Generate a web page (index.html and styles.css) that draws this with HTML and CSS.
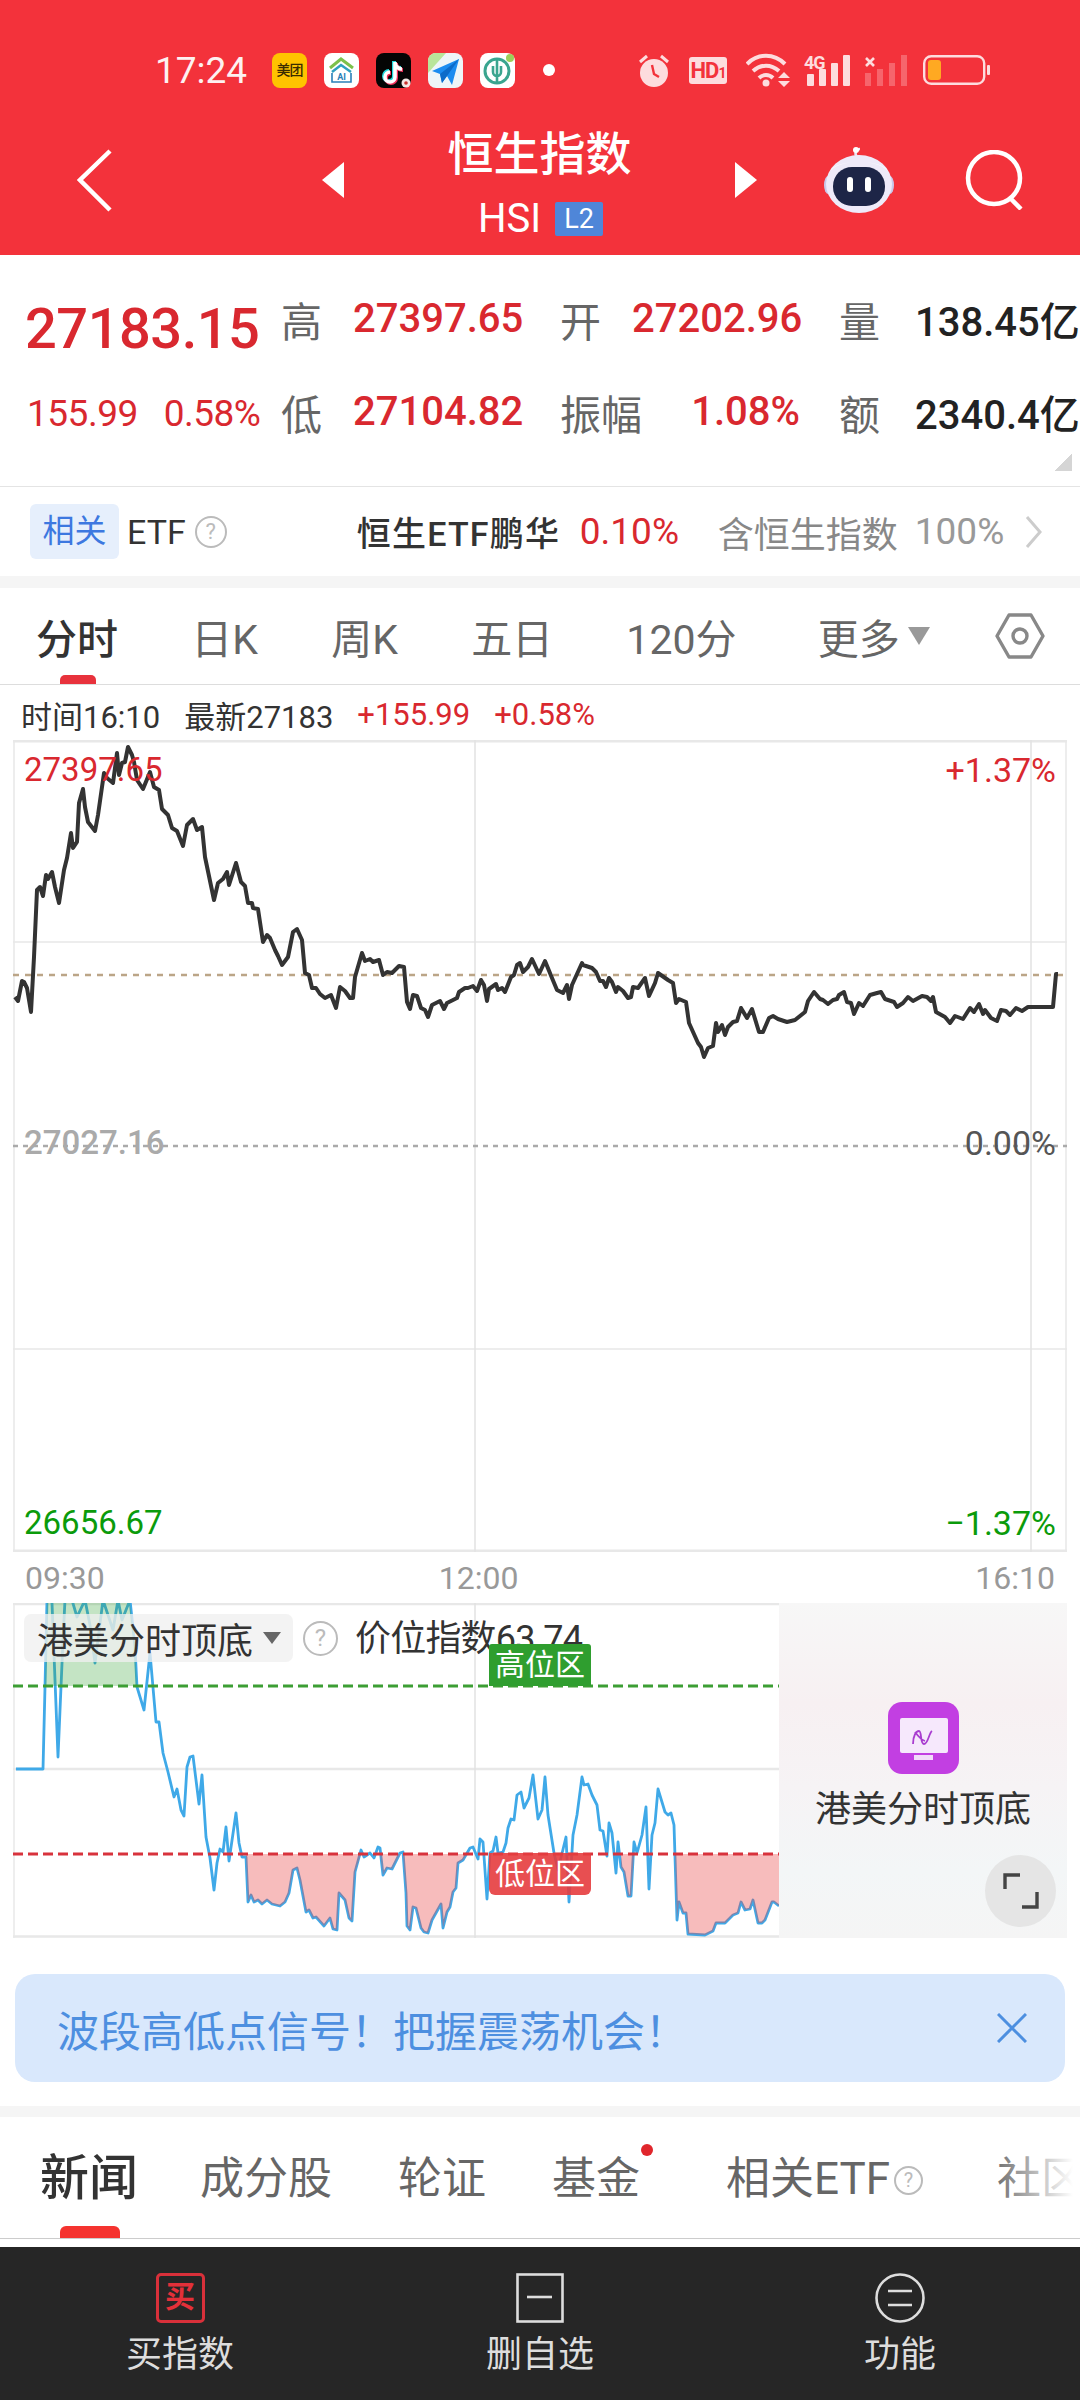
FILE: index.html
```html
<!DOCTYPE html>
<html lang="zh-CN">
<head>
    <meta charset="UTF-8">
    <meta name="viewport" content="width=device-width, initial-scale=1.0">
    <title>恒生指数</title>
    <link rel="stylesheet" href="styles.css">
</head>
<body>

<header class="top">
    <!-- status bar -->
    <div class="status">
        <span class="clock">17:24</span>
        <div class="apps">
            <span class="app app-mt">美团</span>
            <svg class="app" viewBox="0 0 35 35"><rect width="35" height="35" rx="8" fill="#fff"/><path d="M6 15 17 6l12 9" fill="none" stroke="#7cc04b" stroke-width="3"/><path d="M8 19l9-7 10 7" fill="none" stroke="#2f9fc0" stroke-width="2.5"/><path d="M8 20v9h19v-9" fill="none" stroke="#2a7fb8" stroke-width="1.6"/><text x="17.5" y="27" class="app-ai">AI</text></svg>
            <svg class="app" viewBox="0 0 35 35"><rect width="35" height="35" rx="8" fill="#050505"/><path d="M18 8v15a5 5 0 1 1-5-5M18 9c1 4 4 6 7 6" fill="none" stroke="#25dce0" stroke-width="4"/><path d="M20 10v15a5 5 0 1 1-5-5M20 11c1 4 4 6 7 6" fill="none" stroke="#f0305a" stroke-width="4"/><path d="M19 9v15a5 5 0 1 1-5-5M19 10c1 4 4 6 7 6" fill="none" stroke="#fff" stroke-width="3.6"/><circle cx="30" cy="30" r="4.5" fill="#f3e9e6"/><circle cx="30" cy="30" r="1.8" fill="#c8332e"/></svg>
            <svg class="app" viewBox="0 0 35 35"><rect width="35" height="35" rx="8" fill="#eef5f8"/><path d="M0 8a8 8 0 0 1 8-8h10L0 20z" fill="#b9e59a"/><path d="M4 18 31 6l-7 26-5-9-5 7-2-9z" fill="#1c8cf0"/><path d="M12 21 31 6 19 23l-5 7z" fill="#0d6bc9"/></svg>
            <svg class="app" viewBox="0 0 35 35"><rect width="35" height="35" rx="8" fill="#fff"/><circle cx="17" cy="18" r="12" fill="none" stroke="#3aa58f" stroke-width="3"/><path d="M17 7v22M13 13v6a4 4 0 0 0 8 0v-6" fill="none" stroke="#3aa58f" stroke-width="2.6"/><circle cx="30" cy="5" r="4" fill="#9ccf5a"/></svg>
            <span class="dot"></span>
        </div>
        <div class="sys">
            <svg class="sys-alarm" viewBox="0 0 32 34"><path d="M2 9l7-6M30 9l-7-6" stroke="#fddcde" stroke-width="3"/><circle cx="16" cy="20" r="14" fill="#fddcde"/><path d="M14 12l2 9 5 3" fill="none" stroke="#f3323b" stroke-width="2.4"/></svg>
            <span class="sys-hd">HD<small>1</small></span>
            <svg class="sys-wifi" viewBox="0 0 44 34"><g fill="none" stroke="#fddcde" stroke-width="4"><path d="M1 11c11-11 27-11 38 0"/><path d="M7 18c8-7 18-7 26 0"/><path d="M13 25c4-4 10-4 14 0"/></g><circle cx="20" cy="30" r="3.5" fill="#fddcde"/><path d="M32 25h12l-6-6zM32 28h12l-6 6z" fill="#fddcde"/></svg>
            <svg class="sys-sig" viewBox="0 0 46 31"><text x="0" y="14" class="sig-4g">4G</text><g fill="#fddcde"><rect x="3" y="19" width="7" height="12" rx="1"/><rect x="15" y="14" width="7" height="17" rx="1" /><rect x="27" y="8" width="7" height="23" rx="1"/><rect x="39" y="0" width="7" height="31" rx="1"/></g></svg>
            <svg class="sys-sig2" viewBox="0 0 43 31"><path d="M1 3l8 8M9 3l-8 8" stroke="#fddcde" stroke-width="2.6"/><g fill="#fddcde" opacity=".3"><rect x="0" y="18" width="6" height="13"/><rect x="12" y="14" width="6" height="17"/><rect x="24" y="8" width="6" height="23"/><rect x="36" y="0" width="6" height="31"/></g></svg>
            <svg class="sys-bat" viewBox="0 0 67 30"><rect x="1.2" y="1.2" width="60" height="27.6" rx="7" fill="none" stroke="#fddcde" stroke-width="2.4"/><rect x="5" y="5" width="13" height="20" rx="3" fill="#ffa922"/><rect x="64" y="10" width="3" height="10" rx="1" fill="#fddcde"/></svg>
        </div>
    </div>

    <!-- nav -->
    <nav class="nav">
        <svg class="back" viewBox="0 0 35 63"><path d="M33 2 3 31l30 30" fill="none" stroke="#fff" stroke-width="4.5"/></svg>
        <svg class="tri tri-l" viewBox="0 0 22 36"><path d="M22 0v36L0 18z" fill="#fff"/></svg>
        <div class="title">
            <div class="title-name">恒生指数</div>
            <div class="title-code">HSI <span class="l2">L2</span></div>
        </div>
        <svg class="tri" viewBox="0 0 22 36"><path d="M0 0v36l22-18z" fill="#fff"/></svg>
        <svg class="robot" viewBox="0 0 70 66"><path d="M33 10c-3-3-1-8 3-8" fill="none" stroke="#e9e6f5" stroke-width="2.5"/><circle cx="32" cy="3" r="3" fill="#fff"/><ellipse cx="4" cy="38" rx="4" ry="9" fill="#c9c8ea"/><ellipse cx="66" cy="38" rx="4" ry="9" fill="#c9c8ea"/><ellipse cx="35" cy="37" rx="33" ry="29" fill="#eeeaf9"/><path d="M6 24C12 12 58 12 64 24 54 12 16 12 6 24z" fill="#fff"/><rect x="9" y="20" width="52" height="39" rx="19" fill="#1d2547"/><rect x="23" y="30" width="6" height="15" rx="3" fill="#fff"/><rect x="41" y="30" width="6" height="15" rx="3" fill="#fff"/></svg>
        <svg class="search" viewBox="0 0 60 60"><circle cx="29" cy="28" r="26" fill="none" stroke="#fff" stroke-width="4.5"/><path d="M45 48l11 11" stroke="#fff" stroke-width="4.5"/></svg>
    </nav>
</header>

<!-- quote numbers -->
<section class="stats">
    <div class="price">27183.15</div>
    <div class="lbl">高</div><div class="val up">27397.65</div>
    <div class="lbl">开</div><div class="val up right">27202.96</div>
    <div class="lbl">量</div><div class="val dark">138.45亿</div>

    <div class="change"><span>155.99</span><span>0.58%</span></div>
    <div class="lbl">低</div><div class="val up">27104.82</div>
    <div class="lbl">振幅</div><div class="val up right">1.08%</div>
    <div class="lbl">额</div><div class="val dark">2340.4亿</div>
    <i class="corner"></i>
</section>

<section class="etf">
    <span class="etf-tag">相关</span>
    <span class="etf-word">ETF</span>
    <span class="help etf-help">?</span>
    <span class="etf-name">恒生ETF鹏华</span>
    <span class="etf-pct">0.10%</span>
    <span class="etf-inc">含恒生指数</span>
    <span class="etf-full">100%</span>
    <svg class="etf-more" viewBox="0 0 17 32"><path d="M2 1l13 15L2 31" fill="none" stroke="#ccc" stroke-width="3"/></svg>
</section>

<div class="sep"></div>

<div class="tabs">
    <span class="tab tab-on">分时</span>
    <span class="tab">日K</span>
    <span class="tab">周K</span>
    <span class="tab">五日</span>
    <span class="tab">120分</span>
    <span class="tab tab-more">更多<i class="caret"></i></span>
    <svg class="hex" viewBox="0 0 50 46"><path d="M14 2h22l12 21-12 21H14L2 23z" fill="none" stroke="#888" stroke-width="3.4" stroke-linejoin="round"/><circle cx="25" cy="23" r="7" fill="none" stroke="#888" stroke-width="3.4"/></svg>
</div>

<div class="tick">
    <span>时间16:10</span>
    <span>最新27183</span>
    <span class="up">+155.99</span>
    <span class="up">+0.58%</span>
</div>

<!-- intraday chart -->
<div class="chart">
    <svg viewBox="13 740 1054 812" class="chart-svg">
        <g stroke="#e8e8e8" stroke-width="1.5" fill="none">
            <path d="M13 741H1067M13 1551H1067" stroke-width="3"/>
            <path d="M13 942H1067M13 1349H1067M14 740V1552M1066 740V1552"/>
            <path d="M475 740V1552M1031 740V1552" stroke="#e2e2e2"/>
        </g>
        <path d="M13 975H1067" stroke="#bba587" stroke-width="2.5" stroke-dasharray="6 6"/>
        <path d="M13 1146H1067" stroke="#aaa" stroke-width="2.5" stroke-dasharray="5 5"/>
        <polyline fill="none" stroke="#333" stroke-width="4" stroke-linejoin="round" points="15,997 18,1001 22,981 24,982 27,988 31,1012 34,957 37,890 40,887 43,896 46,875 48,879 52,872 55,887 59,903 64,870 67,858 71,833 73,848 77,842 79,803 83,789 85,807 88,822 95,831 98,815 104,773 107,778 113,783 117,753 119,775 122,763 125,762 128,747 132,755 134,762 137,780 143,789 150,772 154,787 159,790 162,809 168,815 172,828 177,831 183,846 187,825 193,819 197,830 202,827 205,857 214,900 218,883 223,879 227,872 229,885 236,863 241,882 245,886 248,903 252,903 253,908 258,909 263,942 267,935 270,938 275,950 278,956 282,965 288,957 293,932 297,929 302,940 305,973 309,975 312,988 316,988 320,994 325,998 331,995 336,1008 340,987 345,991 350,998 353,998 355,977 362,953 365,961 370,959 373,962 379,960 383,975 387,972 392,973 399,966 404,967 407,1002 410,1009 413,995 417,996 421,1008 425,1010 428,1017 432,1005 440,1001 444,1009 447,1003 457,998 459,992 465,988 468,988 473,986 477,991 481,980 484,985 487,1001 489,989 496,984 498,990 502,988 505,992 511,977 514,975 517,965 520,963 523,972 528,967 532,959 539,974 545,961 552,978 557,990 563,993 567,985 569,999 572,985 582,963 583,965 592,968 596,972 600,981 603,981 606,987 609,978 612,982 616,992 618,987 623,991 628,998 631,997 633,987 638,988 645,978 649,996 655,983 658,973 668,980 673,983 676,1003 679,999 686,1002 689,1023 698,1043 701,1047 704,1057 708,1048 713,1046 716,1023 718,1032 722,1025 725,1035 728,1027 733,1022 737,1021 741,1008 747,1018 752,1009 759,1032 763,1032 769,1018 773,1016 778,1019 787,1022 795,1020 805,1012 808,1001 814,992 820,999 823,1000 828,1004 833,1000 837,999 839,995 844,992 847,1002 851,1003 854,1014 859,1003 863,1006 870,995 877,993 881,992 885,999 894,1002 897,1007 903,1003 908,997 913,1001 922,996 927,997 931,1001 933,997 936,1012 945,1017 950,1023 955,1016 963,1019 970,1008 974,1012 979,1004 983,1014 985,1010 991,1018 997,1021 1001,1010 1006,1011 1010,1015 1016,1008 1022,1011 1028,1007 1053,1007 1056,974 1058,974"/>
    </svg>
    <span class="pl pl-l pl-top up">27397.65</span>
    <span class="pl pl-r pl-top up">+1.37%</span>
    <span class="pl pl-l pl-mid pl-gray">27027.16</span>
    <span class="pl pl-r pl-mid pl-dark">0.00%</span>
    <span class="pl pl-l pl-bot down">26656.67</span>
    <span class="pl pl-r pl-bot down">−1.37%</span>
</div>

<div class="axis">
    <span>09:30</span>
    <span class="axis-mid">12:00</span>
    <span class="axis-end">16:10</span>
</div>

<!-- sub chart -->
<div class="sub">
    <div class="sub-plot">
        <svg viewBox="13 1603 766 335" class="sub-svg">
            <defs>
                <clipPath id="lowClip"><rect x="13" y="1854" width="766" height="84"/></clipPath>
                <clipPath id="highClip"><rect x="13" y="1603" width="766" height="83"/></clipPath>
            </defs>
            <g stroke="#e8e8e8" fill="none">
                <path d="M13 1604H779M13 1769H779M13 1936.5H779" stroke-width="2.5"/>
                <path d="M14 1603V1938" stroke-width="1.5"/>
                <path d="M475 1603V1938" stroke="#e2e2e2" stroke-width="1.5"/>
            </g>
            <polyline fill="none" stroke="#3fa9e8" stroke-width="2.8" stroke-linejoin="round" points="16,1769 43,1769 45,1687 47,1600 50,1600 52,1603 58,1757 63,1640 65,1600 72,1600 77,1617 85,1600 90,1625 95,1663 103,1600 113,1630 118,1600 122,1620 130,1600 135,1647 137,1687 144,1710 150,1653 156,1722 159,1722 163,1753 168,1772 174,1797 177,1789 181,1810 184,1816 187,1767 190,1757 193,1756 199,1804 202,1775 206,1837 210,1858 214,1890 217,1863 220,1849 223,1852 226,1827 229,1861 236,1813 239,1843 242,1857 246,1857 248,1902 251,1895 254,1902 258,1900 262,1904 267,1900 272,1904 280,1906 285,1902 289,1893 293,1870 297,1868 300,1880 306,1912 309,1910 313,1918 316,1917 324,1926 330,1918 333,1929 337,1930 339,1893 345,1900 349,1918 352,1921 355,1872 361,1850 364,1857 370,1853 374,1858 378,1847 380,1848 383,1875 387,1868 392,1869 400,1853 403,1852 406,1893 407,1926 410,1930 413,1907 416,1908 421,1928 424,1932 428,1933 432,1920 441,1904 443,1928 447,1912 450,1907 453,1892 456,1888 458,1863 463,1860 470,1848 473,1847 478,1859 480,1839 483,1842 487,1899 490,1853 493,1851 496,1837 498,1853 503,1852 506,1843 508,1828 511,1819 514,1820 517,1795 521,1792 524,1808 529,1798 533,1775 538,1819 542,1810 545,1777 548,1815 554,1853 558,1870 566,1837 569,1902 573,1835 577,1815 582,1777 584,1785 588,1784 592,1795 597,1805 600,1830 603,1831 607,1856 609,1823 612,1833 616,1873 618,1842 621,1867 624,1872 628,1896 631,1896 634,1842 637,1853 642,1835 646,1807 649,1889 652,1835 655,1823 658,1789 665,1812 668,1815 671,1813 674,1825 677,1920 679,1902 683,1913 686,1913 688,1934 705,1935 713,1931 716,1923 725,1923 733,1915 738,1913 741,1902 745,1910 750,1909 753,1900 758,1923 762,1923 765,1920 772,1902 774,1902 779,1906"/>
            <polygon clip-path="url(#lowClip)" fill="rgba(232,70,70,.36)" points="246,1854 246,1857 248,1902 251,1895 254,1902 258,1900 262,1904 267,1900 272,1904 280,1906 285,1902 289,1893 293,1870 297,1868 300,1880 306,1912 309,1910 313,1918 316,1917 324,1926 330,1918 333,1929 337,1930 339,1893 345,1900 349,1918 352,1921 355,1872 361,1854"/>
            <polygon clip-path="url(#lowClip)" fill="rgba(232,70,70,.36)" points="403,1854 406,1893 407,1926 410,1930 413,1907 416,1908 421,1928 424,1932 428,1933 432,1920 441,1904 443,1928 447,1912 450,1907 453,1892 456,1888 458,1863 463,1860 467,1854"/>
            <polygon clip-path="url(#lowClip)" fill="rgba(232,70,70,.36)" points="621,1854 621,1867 624,1872 628,1896 631,1896 634,1854"/>
            <polygon clip-path="url(#lowClip)" fill="rgba(232,70,70,.36)" points="675,1854 677,1920 679,1902 683,1913 686,1913 688,1934 705,1935 713,1931 716,1923 725,1923 733,1915 738,1913 741,1902 745,1910 750,1909 753,1900 758,1923 762,1923 765,1920 772,1902 774,1902 779,1906 779,1854"/>
            <polygon clip-path="url(#lowClip)" fill="rgba(232,70,70,.3)" points="380,1854 383,1875 387,1868 392,1869 400,1854"/>
            <polygon clip-path="url(#highClip)" fill="rgba(60,165,60,.3)" points="45,1686 47,1603 130,1603 135,1647 137,1686"/>
            <path d="M13 1686H779" stroke="#3c9e34" stroke-width="3" stroke-dasharray="10 5"/>
            <path d="M13 1854H779" stroke="#d8323c" stroke-width="3" stroke-dasharray="10 5"/>
        </svg>
        <div class="pick">港美分时顶底<i class="caret caret-dark"></i></div>
        <span class="help sub-help">?</span>
        <span class="sub-val">价位指数63.74</span>
        <span class="zone zone-high">高位区</span>
        <span class="zone zone-low">低位区</span>
    </div>
    <div class="sub-side">
        <svg class="side-icon" viewBox="0 0 71 72"><rect width="71" height="72" rx="14" fill="#c23fe2"/><rect x="12" y="16" width="48" height="35" rx="2" fill="#f6e8fc"/><rect x="26" y="53" width="19" height="5" fill="#f2dcf9"/><path d="M25 42c0-8 3-13 6-13 3 0 1 13 5 13 4 0 5-11 8-13M27 30c3 4 6 8 10 9" fill="none" stroke="#a93dd0" stroke-width="1.8"/></svg>
        <div class="side-name">港美分时顶底</div>
        <div class="expand">
            <svg viewBox="0 0 36 36"><path d="M2 16V2h15M34 19v15H19" fill="none" stroke="#444" stroke-width="3.4"/></svg>
        </div>
    </div>
</div>

<div class="banner">
    <span>波段高低点信号！把握震荡机会！</span>
    <svg viewBox="0 0 30 30"><path d="M1 1l28 28M29 1 1 29" stroke="#4d8fe0" stroke-width="3" fill="none"/></svg>
</div>

<div class="sep sep-news"></div>

<div class="news">
    <span class="news-tab news-on">新闻</span>
    <span class="news-tab">成分股</span>
    <span class="news-tab">轮证</span>
    <span class="news-tab news-dot">基金</span>
    <span class="news-tab news-etf">相关ETF<span class="help news-help">?</span></span>
    <span class="news-tab">社区</span>
</div>

<footer class="foot">
    <div class="foot-item">
        <span class="foot-buy">买</span>
        <span>买指数</span>
    </div>
    <div class="foot-item">
        <svg class="foot-ico" viewBox="0 0 48 50"><rect x="1.5" y="1.5" width="45" height="47" fill="none" stroke="#ddd" stroke-width="2.6"/><path d="M11 24h25" stroke="#ddd" stroke-width="2.6"/></svg>
        <span>删自选</span>
    </div>
    <div class="foot-item">
        <svg class="foot-ico" viewBox="0 0 50 50"><circle cx="25" cy="25" r="23.5" fill="none" stroke="#ddd" stroke-width="2.6"/><path d="M13 18h24M13 32h24" stroke="#ddd" stroke-width="2.6"/></svg>
        <span>功能</span>
    </div>
</footer>

</body>
</html>
```

FILE: styles.css
```css
* { box-sizing: border-box; }
html, body { margin: 0; padding: 0; }
body {
    width: 1080px;
    height: 2400px;
    overflow: hidden;
    background: #fff;
    color: #333;
    font-family: Roboto, "Noto Sans CJK SC", sans-serif;
}
svg { display: block; flex: none; }
.up { color: #d9282f; }
.down { color: #0b9b0b; }

/* header */
.top { height: 255px; background: #f3323b; color: #fff; padding-top: 50px; }
.status { display: flex; align-items: center; height: 40px; padding-left: 155px; }
.clock { font-size: 37px; width: 117px; color: #fdf1f1; }
.apps { display: flex; align-items: center; gap: 17px; }
.app { width: 35px; height: 35px; display: block; }
.app-mt {
    background: #ffc300;
    border-radius: 8px;
    color: #3a2c00;
    font-size: 14px;
    font-weight: 500;
    line-height: 35px;
    text-align: center;
    white-space: nowrap;
    letter-spacing: -1px;
}
.app-ai { font: 700 9px Roboto, sans-serif; fill: #2a7fb8; text-anchor: middle; }
.dot { width: 12px; height: 12px; background: #fff; border-radius: 50%; margin-left: 11px; }
.sys { display: flex; align-items: center; margin-left: 83px; }
.sys-alarm { width: 32px; height: 34px; }
.sys-hd {
    width: 38px;
    height: 27px;
    margin-left: 19px;
    background: #fddcde;
    border-radius: 3px;
    color: #f3323b;
    font: 700 22px/27px "Liberation Sans Narrow", Roboto, sans-serif;
    text-align: center;
    letter-spacing: -1px;
}
.sys-hd small { font-size: 14px; }
.sys-wifi { width: 44px; height: 34px; margin-left: 19px; }
.sys-sig { width: 46px; height: 31px; margin-left: 14px; overflow: visible; }
.sig-4g { font: 700 18px Roboto, sans-serif; fill: #fddcde; letter-spacing: -1px; }
.sys-sig2 { width: 43px; height: 31px; margin-left: 15px; }
.sys-bat { width: 67px; height: 30px; margin-left: 15px; }

.nav { display: flex; align-items: center; height: 120px; margin-top: 30px; padding-left: 77px; }
.back { width: 35px; height: 63px; }
.tri { width: 22px; height: 36px; }
.tri-l { margin-left: 210px; }
.title { width: 391px; text-align: center; padding-top: 2px; }
.title-name { font-size: 46px; font-weight: 500; line-height: 62px; }
.title-code { display: flex; justify-content: center; align-items: center; gap: 14px; font-size: 40px; line-height: 40px; margin-top: 14px; padding-left: 2px; }
.l2 { width: 48px; height: 34px; background: #4f86d8; font-size: 27px; line-height: 34px; color: #fff; border-radius: 2px; }
.robot { width: 70px; height: 66px; margin-left: 67px; }
.search { width: 60px; height: 60px; margin-left: 71px; }

/* numbers */
.stats {
    position: relative;
    display: grid;
    grid-template-columns: 281px 72px 207px 72px 207px 76px 163px;
    grid-auto-rows: 93px;
    align-items: center;
    height: 232px;
    padding-top: 17px;
    border-bottom: 1.5px solid #e4e4e4;
}
.price { font-size: 56px; font-weight: 500; color: #d9282f; padding: 20px 0 0 25px; letter-spacing: -.5px; }
.change { display: flex; font-size: 37px; color: #d9282f; padding: 4px 0 0 27px; gap: 26px; white-space: nowrap; letter-spacing: -.5px; }
.lbl { font-size: 41px; color: #666; white-space: nowrap; }
.val { font-size: 40px; font-weight: 500; white-space: nowrap; }
.val.right { text-align: right; padding-right: 39px; }
.val.dark { color: #222; }
.corner {
    position: absolute;
    right: 8px;
    bottom: 15px;
    width: 18px;
    height: 18px;
    background: linear-gradient(135deg, transparent 50%, #d5d5d5 50%);
}

.etf { display: flex; align-items: center; height: 89px; padding-left: 30px; }
.etf-tag { width: 89px; height: 55px; background: #e6effc; border-radius: 6px; color: #3d78e0; font-size: 32px; line-height: 55px; text-align: center; }
.etf-word { font-size: 34px; color: #333; margin-left: 8px; }
.help {
    display: inline-block;
    width: 32px;
    height: 32px;
    border: 2px solid #bbb;
    border-radius: 50%;
    color: #bbb;
    font-size: 22px;
    line-height: 28px;
    text-align: center;
    font-weight: 400;
}
.etf-help { margin-left: 9px; }
.etf-name { font-size: 34px; font-weight: 500; color: #333; margin-left: 130px; white-space: nowrap; width: 223px; letter-spacing: 1.2px; }
.etf-pct { font-size: 37px; color: #d9282f; width: 138px; }
.etf-inc { font-size: 36px; color: #888; width: 197px; white-space: nowrap; }
.etf-full { font-size: 37px; color: #999; width: 110px; }
.etf-more { width: 17px; height: 32px; }

.sep { height: 12px; background: #f5f5f5; }

.tabs {
    position: relative;
    display: flex;
    align-items: center;
    justify-content: space-between;
    height: 97px;
    padding: 0 35px 0 36px;
    border-bottom: 1px solid #ddd;
    font-size: 41px;
    color: #666;
}
.tab-on { color: #333; font-weight: 500; }
.tab-on::after {
    content: "";
    position: absolute;
    left: 60px;
    bottom: 0;
    width: 36px;
    height: 9px;
    background: #e8323c;
    border-radius: 5px 5px 0 0;
}
.tab-more { display: flex; align-items: center; gap: 8px; margin-left: 8px; margin-right: -8px; }
.caret {
    display: inline-block;
    width: 0;
    height: 0;
    border-left: 11px solid transparent;
    border-right: 11px solid transparent;
    border-top: 18px solid #999;
}
.hex { width: 50px; height: 46px; }

.tick { display: flex; height: 55px; align-items: center; padding: 3px 0 0 21px; font-size: 31px; color: #333; gap: 24px; white-space: nowrap; }

/* charts */
.chart { position: relative; height: 812px; margin: 0 13px; }
.chart-svg { width: 1054px; height: 812px; }
.pl { position: absolute; font-size: 33px; line-height: 40px; white-space: nowrap; }
.pl-l { left: 11px; }
.pl-r { right: 11px; font-size: 34px; }
.pl-top { top: 10px; }
.pl-mid { top: 383px; }
.pl-bot { top: 763px; }
.pl-gray { color: #aaa; font-weight: 500; }
.pl-dark { color: #555; }

.axis { display: flex; align-items: center; height: 51px; padding: 0 25px; color: #999; font-size: 32px; }
.axis-mid { margin-left: 334px; }
.axis-end { margin-left: auto; }

.sub { display: flex; height: 335px; margin: 0 13px; }
.sub-plot { position: relative; width: 766px; overflow: hidden; }
.sub-svg { width: 766px; height: 335px; }
.pick {
    position: absolute;
    left: 11px;
    top: 11px;
    display: flex;
    align-items: center;
    width: 269px;
    height: 48px;
    padding-left: 13px;
    background: rgba(240, 240, 240, .78);
    border-radius: 7px;
    font-size: 36px;
    color: #333;
    white-space: nowrap;
}
.caret-dark { margin-left: 10px; border-left-width: 9px; border-right-width: 9px; border-top: 12px solid #666; }
.sub-help { position: absolute; left: 290px; top: 18px; width: 35px; height: 35px; font-size: 24px; line-height: 30px; }
.sub-val { position: absolute; left: 342px; top: 14px; font-size: 36px; line-height: 44px; color: #333; white-space: nowrap; letter-spacing: -.8px; }
.zone {
    position: absolute;
    left: 476px;
    width: 102px;
    height: 42px;
    color: #fff;
    font-size: 30px;
    line-height: 42px;
    text-align: center;
    white-space: nowrap;
}
.zone-high { top: 41px; background: #2f9e2f; border-radius: 3px 3px 0 0; }
.zone-low { top: 250px; background: rgba(229, 60, 62, .9); border-radius: 0 0 6px 6px; }

.sub-side {
    position: relative;
    width: 288px;
    display: flex;
    flex-direction: column;
    align-items: center;
    padding-top: 99px;
    background: linear-gradient(180deg, #f7f7f7 0%, #f7f0f2 30%, #f6f3f5 55%, #f3f6f7 80%, #f5f5f5 100%);
}
.side-icon { width: 71px; height: 72px; }
.side-name { font-size: 36px; line-height: 44px; margin-top: 14px; color: #333; white-space: nowrap; }
.expand {
    position: absolute;
    right: 11px;
    bottom: 11px;
    width: 71px;
    height: 72px;
    border-radius: 50%;
    background: #e5e5e5;
    display: flex;
    align-items: center;
    justify-content: center;
}
.expand svg { width: 36px; height: 36px; }

.banner {
    display: flex;
    align-items: center;
    justify-content: space-between;
    height: 108px;
    margin: 36px 15px 0 15px;
    padding: 0 38px 0 42px;
    background: #d9e8fc;
    border-radius: 20px;
    color: #4d8fe0;
    font-size: 42px;
    white-space: nowrap;
}
.banner svg { width: 30px; height: 30px; }
.sep-news { height: 11px; margin-top: 24px; }

.news {
    position: relative;
    display: flex;
    align-items: center;
    gap: 66px;
    height: 122px;
    padding: 3px 0 0 40px;
    border-bottom: 1.5px solid #ccc;
    overflow: hidden;
    font-size: 44px;
    color: #666;
    white-space: nowrap;
}
.news::after {
    content: "";
    position: absolute;
    right: 0;
    top: 0;
    bottom: 0;
    width: 90px;
    background: linear-gradient(90deg, rgba(255, 255, 255, 0), #fff 92%);
}
.news-tab { position: relative; flex: none; line-height: 66px; }
.news-on { color: #333; font-size: 49px; font-weight: 500; margin-right: -4px; }
.news-on::after {
    content: "";
    position: absolute;
    left: 20px;
    bottom: -26px;
    width: 60px;
    height: 12px;
    background: #f5332f;
    border-radius: 6px 6px 0 0;
}
.news-dot { margin-right: 20px; }
.news-dot::after {
    content: "";
    position: absolute;
    right: -13px;
    top: -2px;
    width: 12px;
    height: 12px;
    background: #e0262c;
    border-radius: 50%;
}
.news-etf { display: flex; align-items: center; gap: 4px; margin-right: 8px; }
.news-help { width: 29px; height: 29px; font-size: 20px; line-height: 25px; margin-top: 2px; }

.foot {
    display: grid;
    grid-template-columns: repeat(3, 360px);
    height: 153px;
    margin-top: 8px;
    padding-top: 26px;
    background: #262626;
    color: #ddd;
    font-size: 36px;
}
.foot-item { display: flex; flex-direction: column; align-items: center; gap: 11px; line-height: 42px; }
.foot-ico { width: 50px; height: 50px; }
.foot-buy {
    width: 49px;
    height: 50px;
    border: 3px solid #d9303a;
    border-radius: 5px;
    color: #e33039;
    font-size: 30px;
    font-weight: 700;
    line-height: 42px;
    text-align: center;
}
```
